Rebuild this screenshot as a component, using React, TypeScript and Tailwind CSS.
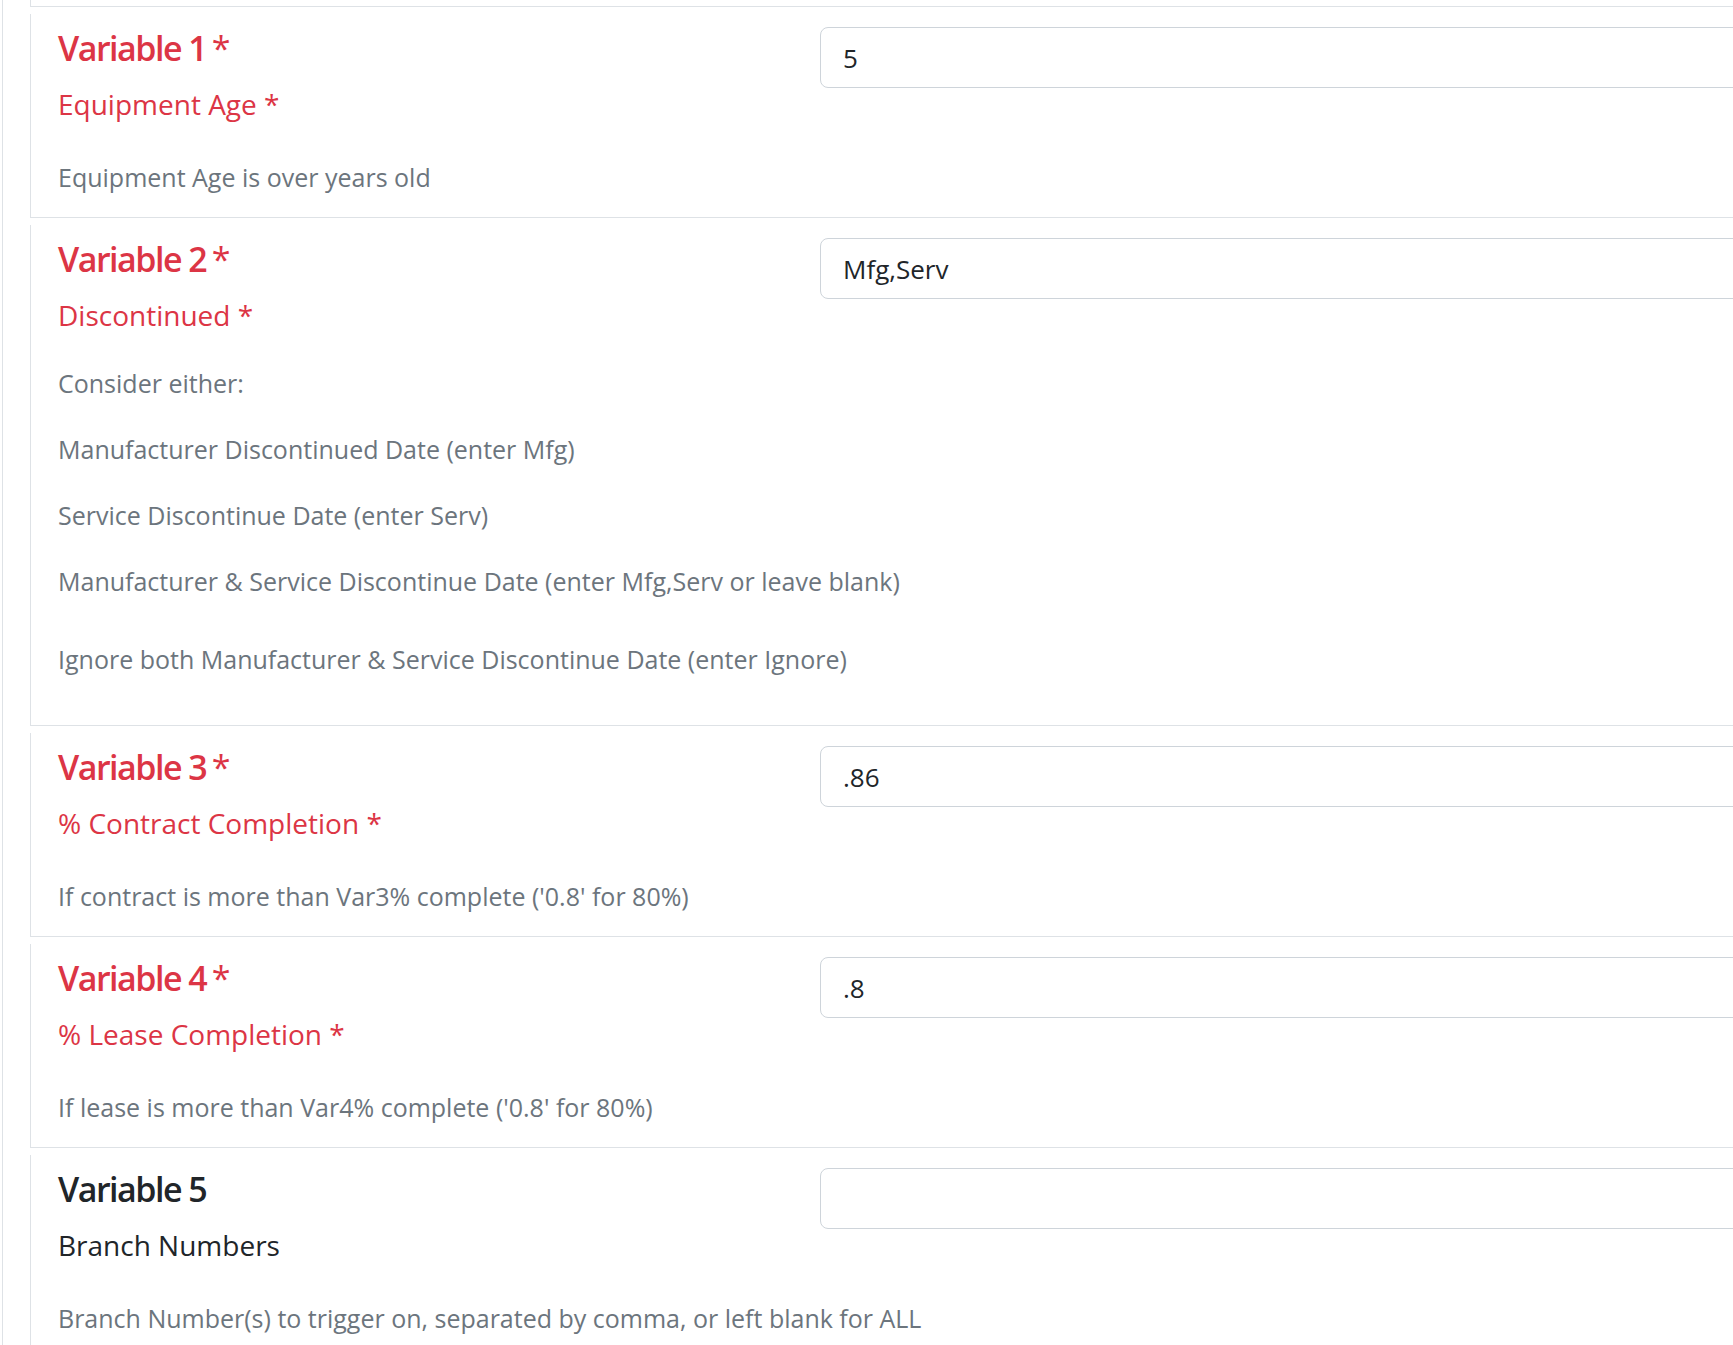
import type { ReactNode } from "react";

type Variable = {
  label: string;
  name: string;
  value: string;
  required: boolean;
  hint: ReactNode;
};

const font = { fontFamily: '"Open Sans", "Noto Sans", Arial, sans-serif' };

const variables: Variable[] = [
  {
    label: "Variable 1",
    name: "Equipment Age",
    value: "5",
    required: true,
    hint: <p className="mt-[37px]">Equipment Age is over years old</p>,
  },
  {
    label: "Variable 2",
    name: "Discontinued",
    value: "Mfg,Serv",
    required: true,
    hint: (
      <div className="mt-[32px] pb-[26px]">
        <p>Consider either:</p>
        <p className="mt-[30px]">Manufacturer Discontinued Date (enter Mfg)</p>
        <p className="mt-[30px]">Service Discontinue Date (enter Serv)</p>
        <p className="mt-[30px]">Manufacturer &amp; Service Discontinue Date (enter Mfg,Serv or leave blank)</p>
        <p className="mt-[42px]">Ignore both Manufacturer &amp; Service Discontinue Date (enter Ignore)</p>
      </div>
    ),
  },
  {
    label: "Variable 3",
    name: "% Contract Completion",
    value: ".86",
    required: true,
    hint: <p className="mt-[37px]">If contract is more than Var3% complete ('0.8' for 80%)</p>,
  },
  {
    label: "Variable 4",
    name: "% Lease Completion",
    value: ".8",
    required: true,
    hint: <p className="mt-[37px]">If lease is more than Var4% complete ('0.8' for 80%)</p>,
  },
  {
    label: "Variable 5",
    name: "Branch Numbers",
    value: "",
    required: false,
    hint: <p className="mt-[37px]">Branch Number(s) to trigger on, separated by comma, or left blank for ALL</p>,
  },
];

function VariableCard({ v }: { v: Variable }) {
  const tone = v.required ? "text-[#dc3545]" : "text-[#212529]";
  return (
    <div className="mt-[7px] border-b border-l border-[#dee2e6]">
      <div className="flex">
        <div className="w-[789px] shrink-0 pl-[27px] pt-[12px]">
          <h4 className={`text-[34px] font-semibold leading-[44px] tracking-[-1.5px] ${tone}`}>
            {v.label}
            {v.required && <span className="ml-[-2px] font-normal"> *</span>}
          </h4>
          <div className={`mt-4 text-[28px] leading-[36px] ${tone}`}>
            {v.name}
            {v.required && " *"}
          </div>
        </div>
        <div className="pt-[13px]">
          <input
            readOnly
            value={v.value}
            style={font}
            className="h-[61px] w-[1200px] rounded-[8px] border border-[#ced4da] bg-white px-[22px] text-[26px] text-[#212529] outline-none"
          />
        </div>
      </div>
      <div className="whitespace-nowrap pb-[22px] pl-[27px] text-[25px] leading-[36px] text-[#6c757d]">{v.hint}</div>
    </div>
  );
}

export default function App() {
  return (
    <div style={font} className="h-[1345px] overflow-hidden bg-white pl-[2px]">
      <div className="h-full border-l border-[#dee2e6] pl-[27px]">
        <div className="w-[2200px]">
          <div className="h-[7px] border-b border-l border-[#dee2e6]" />
          {variables.map((v) => (
            <VariableCard key={v.label} v={v} />
          ))}
        </div>
      </div>
    </div>
  );
}
